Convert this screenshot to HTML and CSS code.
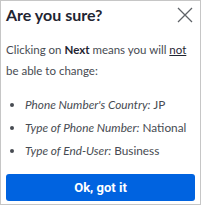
FILE: index.html
```html
<!DOCTYPE html>
<html>
<head>
<meta charset="utf-8">
<link rel="stylesheet" href="styles.css">
</head>
<body>
<div class="dialog">
  <div class="header">
    <h1 class="title">Are you sure?</h1>
    <button class="close" aria-label="Close">
      <svg width="16" height="16" viewBox="0 0 16 16"><path d="M1 1L15 15M15 1L1 15" stroke="#5f6368" stroke-width="1.3" fill="none"/></svg>
    </button>
  </div>
  <p class="msg">Clicking on <b>Next</b> means you will <u>not</u> be able to change:</p>
  <ul class="list">
    <li><i>Phone Number's Country:</i> JP</li>
    <li><i>Type of Phone Number:</i> National</li>
    <li><i>Type of End-User:</i> Business</li>
  </ul>
  <button class="ok">Ok, got it</button>
</div>
</body>
</html>
```
FILE: styles.css
```css
html, body { margin: 0; padding: 0; background: #fff; }
.dialog {
  width: 201px;
  height: 205px;
  box-sizing: border-box;
  border: 1px solid #c6c6c6;
  padding: 4px 5px 0 5px;
  display: flex;
  flex-direction: column;
  font-family: Lato, "Liberation Sans", sans-serif;
  color: #474b52;
}
.header { display: flex; justify-content: space-between; align-items: flex-start; }
.title {
  margin: 0;
  font-size: 16px;
  font-weight: 700;
  color: #1f2532;
  line-height: 20px;
}
.close {
  border: 0; background: none; padding: 0; margin: 2px 2px 0 0;
  width: 16px; height: 16px; display: block;
}
.close svg { display: block; }
.msg {
  margin: 14px 0 0 0;
  font-size: 11.5px;
  line-height: 21px;
}
.msg b { color: #1f2532; }
.msg u { color: #1f2532; }
.list {
  margin: 12px 0 0 0;
  padding: 0 0 0 19px;
  font-size: 11.8px;
  line-height: 23px;
}
.ok {
  margin-top: auto;
  margin-bottom: 3px;
  height: 27px;
  border: 0;
  border-radius: 3px;
  background: #0063e0;
  color: #fff;
  font-family: Roboto, "Liberation Sans", sans-serif;
  font-weight: 700;
  font-size: 13px;
}
```
